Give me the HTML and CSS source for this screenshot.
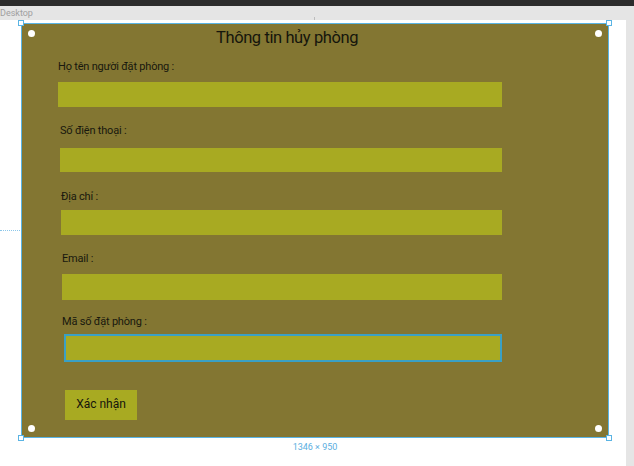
FILE: index.html
```html
<!DOCTYPE html>
<html lang="vi">
<head>
<meta charset="utf-8">
<title>Thông tin hủy phòng</title>
<link rel="stylesheet" href="styles.css">
</head>
<body>
<div class="topbar"></div>
<div class="ruler"><span class="ruler-label">Desktop</span><span class="ruler-tick"></span></div>
<div class="canvas">
  <div class="stage">
    <div class="guide"></div>
    <div class="frame">
      <h1 class="title">Thông tin hủy phòng</h1>
      <div class="field f1">
        <label class="label">Họ tên người đặt phòng :</label>
        <div class="input i1"></div>
      </div>
      <div class="field f2">
        <label class="label">Số điện thoại :</label>
        <div class="input i2"></div>
      </div>
      <div class="field f3">
        <label class="label">Địa chỉ :</label>
        <div class="input i3"></div>
      </div>
      <div class="field f4">
        <label class="label">Email :</label>
        <div class="input i4"></div>
      </div>
      <div class="field f5">
        <label class="label">Mã số đặt phòng :</label>
        <div class="input i5 selected"></div>
      </div>
      <button class="submit">Xác nhận</button>

      <span class="corner c-tl"></span>
      <span class="corner c-tr"></span>
      <span class="corner c-bl"></span>
      <span class="corner c-br"></span>
      <span class="dot d-tl"></span>
      <span class="dot d-tr"></span>
      <span class="dot d-bl"></span>
      <span class="dot d-br"></span>
      <span class="size">1346 × 950</span>
    </div>
  </div>
  <div class="scroll-strip"></div>
</div>
</body>
</html>
```

FILE: styles.css
```css
* { box-sizing: border-box; }

html, body {
  margin: 0;
  padding: 0;
}

body {
  width: 634px;
  height: 466px;
  overflow: hidden;
  background: #ffffff;
  font-family: Roboto, "Noto Sans", "Liberation Sans", sans-serif;
  color: #1c1c14;
}

.topbar {
  height: 6px;
  background: #2c2c2c;
}

.ruler {
  position: relative;
  height: 14px;
  background: #e5e5e5;
  display: flex;
  align-items: center;
}

.ruler-label {
  margin-left: 0;
  font-size: 9px;
  color: #a0a0a0;
  line-height: 14px;
}

.ruler-tick {
  position: absolute;
  left: 314px;
  bottom: 0;
  width: 1px;
  height: 3px;
  background: #bdbdbd;
}

.canvas {
  display: flex;
  height: 446px;
}

.stage {
  position: relative;
  width: 626px;
  padding: 3px 0 0 21px;
  background: #ffffff;
}

.scroll-strip {
  width: 8px;
  background: #e5e5e5;
}

.guide {
  position: absolute;
  left: 0;
  top: 210px;
  width: 20px;
  border-top: 1px dotted #8cc7ea;
}

.frame {
  position: relative;
  width: 588px;
  height: 415px;
  background: #837632;
  border: 1px solid #5ab4e4;
  display: flex;
  flex-direction: column;
  align-items: flex-start;
}

.title {
  margin: 4px 0 0 194px;
  font-size: 16.5px;
  letter-spacing: -0.4px;
  line-height: 20px;
  font-weight: 400;
  color: #15150c;
}

.field {
  align-self: stretch;
  display: flex;
  flex-direction: column;
  margin-right: 106px;
}

.label {
  font-size: 11px;
  letter-spacing: -0.2px;
  line-height: 13px;
  color: #18180e;
}

.input {
  background: #a8aa22;
}

.f1 { margin-left: 36px; margin-top: 12px; }
.f2 { margin-left: 38px; margin-top: 17px; }
.f3 { margin-left: 39px; margin-top: 18px; }
.f4 { margin-left: 40px; margin-top: 17px; }
.f5 { margin-left: 40px; margin-top: 15px; }

.i1 { margin-top: 9px; height: 25px; }
.i2 { margin-top: 11px; height: 24px; }
.i3 { margin-top: 7px; height: 25px; }
.i4 { margin-top: 9px; height: 26px; }
.i5 { margin-top: 6px; height: 28px; margin-left: 2px; }

.selected {
  border: 2px solid #3aa0c4;
}

.submit {
  margin: 28px 0 0 43px;
  width: 72px;
  height: 30px;
  border: 0;
  padding: 0 0 3px 0;
  background: #a8aa22;
  font-family: Roboto, "Noto Sans", "Liberation Sans", sans-serif;
  font-size: 12px;
  color: #15150c;
  text-align: center;
}

.corner {
  position: absolute;
  width: 6px;
  height: 6px;
  background: #ffffff;
  border: 1px solid #5ab4e4;
}
.c-tl { left: -4px; top: -4px; }
.c-tr { right: -4px; top: -4px; }
.c-bl { left: -4px; bottom: -4px; }
.c-br { right: -4px; bottom: -4px; }

.dot {
  position: absolute;
  width: 7px;
  height: 7px;
  border-radius: 50%;
  background: #ffffff;
}
.d-tl { left: 6px; top: 6px; }
.d-tr { right: 6px; top: 6px; }
.d-bl { left: 6px; bottom: 5px; }
.d-br { right: 6px; bottom: 5px; }

.size {
  position: absolute;
  left: 0;
  right: 0;
  top: 418px;
  text-align: center;
  font-size: 9px;
  line-height: 11px;
  color: #5aaee0;
}
```
